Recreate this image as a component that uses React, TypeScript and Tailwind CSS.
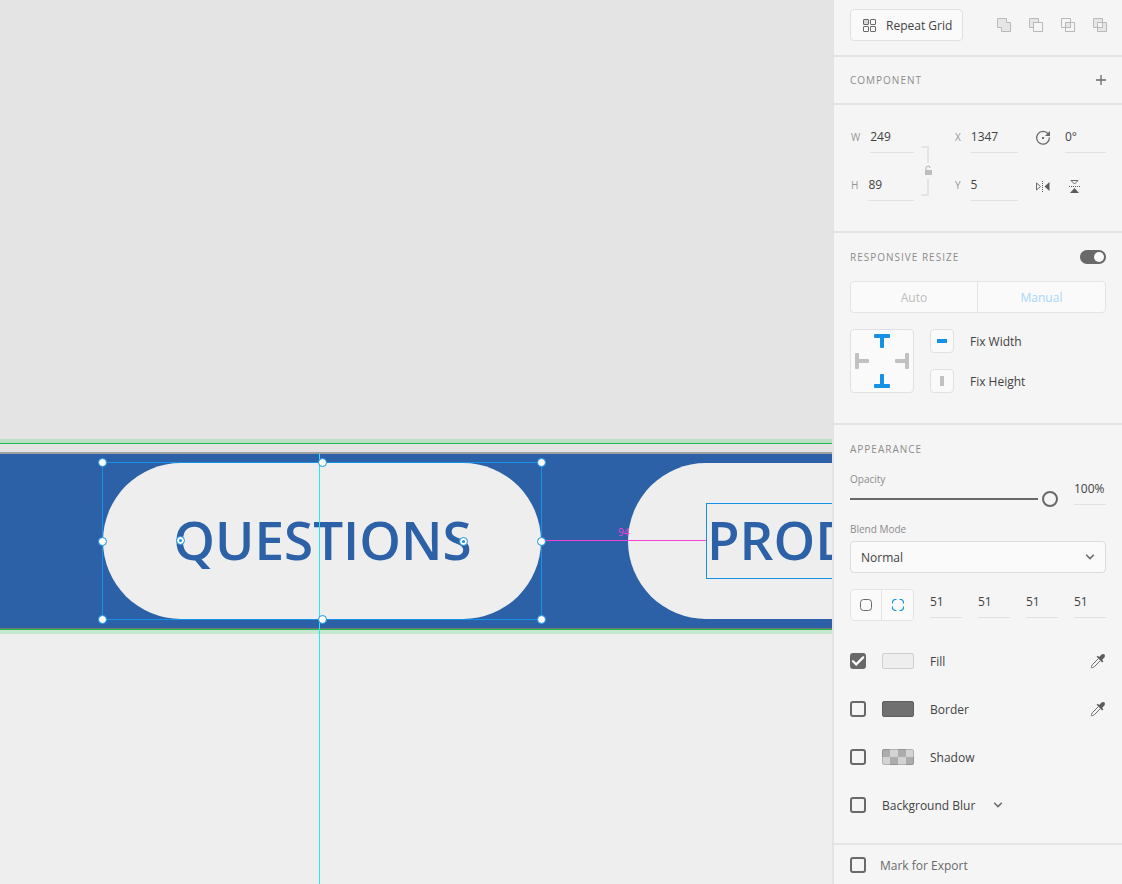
import { useState } from "react";
import type { ReactNode } from "react";

const handles = [
  "left-[98px] top-[458px]",
  "left-[318px] top-[458px]",
  "left-[537px] top-[458px]",
  "left-[98px] top-[537px]",
  "left-[537px] top-[537px]",
  "left-[98px] top-[615px]",
  "left-[318px] top-[615px]",
  "left-[537px] top-[615px]",
];

function Canvas() {
  return (
    <main className="relative min-w-0 flex-1 overflow-hidden bg-[#e4e4e4]">
      <div className="absolute inset-x-0 top-[439px] h-1 bg-[#bce0c5]" />
      <div className="absolute inset-x-0 top-[443px] h-px bg-[#24b950]" />
      <div className="absolute inset-x-0 top-[452px] bottom-0 border-t-2 border-[#a0a0a0] bg-[#eeeeee]" />
      <div className="absolute inset-x-0 top-[454px] h-[174px] bg-[#2c61a7]" />
      <div className="absolute inset-x-0 top-[628px] h-px bg-[#77776f]" />
      <div className="absolute inset-x-0 top-[629px] h-px bg-[#24b950]" />
      <div className="absolute inset-x-0 top-[630px] h-1 bg-[#c6e8cf]" />

      <div className="absolute left-[103px] top-[463px] flex h-[156px] w-[438px] items-center justify-center rounded-full bg-[#eeeeee] pb-[3px] pl-px font-['Open_Sans','Noto_Sans',sans-serif] text-[53px] font-semibold text-[#2c61a7]">
        QUESTIONS
      </div>
      <div className="absolute left-[628px] top-[463px] flex h-[156px] w-[438px] items-center rounded-full bg-[#eeeeee] pl-[78px]">
        <div className="flex h-[76px] w-[282px] items-center border border-[#1592e6] pb-[3px] font-['Open_Sans','Noto_Sans',sans-serif] text-[53px] font-semibold text-[#2c61a7]">
          PROD
        </div>
      </div>

      <div className="absolute left-[319px] top-[454px] bottom-0 w-px bg-[#22eef0]" />
      <div className="absolute left-[102px] top-[462px] h-[158px] w-[440px] border border-[#1592e6]" />
      <div className="absolute left-[546px] top-[540px] h-px w-[160px] bg-[#f53fd6]" />
      <span className="absolute left-[618px] top-[526px] text-[10px] leading-3 text-[#f53fd6]">94</span>
      {handles.map((place) => (
        <span key={place} className={`absolute size-[9px] rounded-full border border-[#1592e6] bg-white ${place}`} />
      ))}
      <span className="absolute left-[176px] top-[536px] flex size-[9px] items-center justify-center rounded-full border border-[#1592e6] bg-white">
        <span className="size-[3px] rounded-full bg-[#1592e6]" />
      </span>
      <span className="absolute left-[459px] top-[537px] flex size-[9px] items-center justify-center rounded-full border border-[#1592e6] bg-white">
        <span className="size-[3px] rounded-full bg-[#1592e6]" />
      </span>
    </main>
  );
}

function Heading({ children }: { children: ReactNode }) {
  return <h2 className="text-[10px] leading-4 tracking-widest text-[#8c8c8c]">{children}</h2>;
}

function NumberField({ label, value, showLabel = true }: { label: string; value: string; showLabel?: boolean }) {
  return (
    <label className="flex min-w-0 flex-1 items-center gap-2.5">
      {showLabel && <span className="pl-px text-[10px] text-[#959595]">{label}</span>}
      <input
        aria-label={label}
        defaultValue={value}
        className="h-8 w-0 min-w-0 flex-1 border-b border-[#e1e1e1] bg-transparent text-xs text-[#424242] outline-none"
      />
    </label>
  );
}

function Check({ id, checked = false }: { id: string; checked?: boolean }) {
  const [on, setOn] = useState(checked);
  return (
    <span className="relative size-4 shrink-0">
      <input
        id={id}
        type="checkbox"
        checked={on}
        onChange={() => setOn(!on)}
        className="block size-4 appearance-none rounded-[3px] border-2 border-[#696969] checked:bg-[#696969]"
      />
      {on && (
        <svg viewBox="0 0 16 16" className="pointer-events-none absolute inset-0 size-4" fill="none" stroke="#fff" strokeWidth="2.2">
          <path d="M3 8.2 6.2 11.4 13.2 4.4" strokeLinecap="round" />
        </svg>
      )}
    </span>
  );
}

function Chevron() {
  return (
    <svg viewBox="0 0 10 6" className="h-1.5 w-2.5" fill="none" stroke="#696969" strokeWidth="1.5">
      <path d="M1.2 0.8 5 4.6 8.8 0.8" />
    </svg>
  );
}

function Eyedropper() {
  return (
    <svg viewBox="0 0 16 16" className="size-4" fill="none">
      <path d="M8.2 5.8 2.6 11.4C1.6 12.4 1.9 13 1.3 13.9 1 14.5 1.6 15 2.2 14.7 3 14.2 3.7 14.4 4.6 13.4L10.2 7.8" stroke="#696969" />
      <path d="M6.6 3.8 7.8 2.7 9.2 3.9 11.3 1.8C12.3.8 13.7.8 14.5 1.6 15.2 2.4 15.2 3.7 14.2 4.7L12.2 6.8 13.3 8.2 12.2 9.4Z" fill="#5c5c5c" />
    </svg>
  );
}

const booleanIcons = [
  {
    name: "Add",
    art: <path d="M1.5 1.5h9v4h4v9h-9v-4h-4z" fill="#e6e6e6" />,
  },
  {
    name: "Subtract",
    art: (
      <>
        <path d="M1.5 1.5h9v4h-5v5h-4z" fill="#e6e6e6" />
        <path d="M5.5 5.5h9v9h-9z" />
      </>
    ),
  },
  {
    name: "Intersect",
    art: (
      <>
        <path d="M5.5 5.5h5v5h-5z" fill="#e6e6e6" />
        <path d="M1.5 1.5h9v9h-9zM5.5 5.5h9v9h-9z" />
      </>
    ),
  },
  {
    name: "Exclude overlap",
    art: (
      <>
        <path d="M1.5 1.5h9v9h-9zM5.5 5.5h9v9h-9z" fill="#e6e6e6" />
        <path d="M5.5 5.5h5v5h-5z" fill="#f5f5f5" />
      </>
    ),
  },
];

function ArrangeBar() {
  return (
    <section className="flex items-center justify-between border-b-2 border-[#e4e4e4] pt-[9px] pr-3.5 pb-3.5 pl-4">
      <button className="flex h-8 items-center gap-2.5 rounded border border-[#e1e1e1] bg-[#fafafa] pr-2.5 pl-3 text-xs text-[#424242]">
        <svg viewBox="0 0 13 13" className="size-[13px]" fill="none" stroke="#696969">
          <rect x=".5" y=".5" width="5" height="5" rx=".5" fill="#d8d8d8" />
          <rect x="7.5" y=".5" width="5" height="5" rx=".5" />
          <rect x=".5" y="7.5" width="5" height="5" rx=".5" />
          <rect x="7.5" y="7.5" width="5" height="5" rx=".5" />
        </svg>
        <span className="pt-0.5">Repeat Grid</span>
      </button>
      <div className="flex gap-4">
        {booleanIcons.map(({ name, art }) => (
          <button key={name} aria-label={name}>
            <svg viewBox="0 0 16 16" className="size-4" fill="none" stroke="#b9b9b9">
              {art}
            </svg>
          </button>
        ))}
      </div>
    </section>
  );
}

function TransformSection() {
  return (
    <section className="flex border-b-2 border-[#e4e4e4] px-4 pt-4 pb-[30px]">
      <div className="flex w-16 flex-col gap-4">
        <NumberField label="W" value="249" />
        <NumberField label="H" value="89" />
      </div>
      <button aria-label="Lock aspect ratio" className="ml-1.5">
        <svg viewBox="0 0 14 80" className="h-20 w-3.5" fill="none">
          <path d="M1.5 26H8v16M8 58v16H1.5" stroke="#e4e4e4" strokeWidth="2" />
          <rect x="5" y="49" width="7" height="5" rx=".5" fill="#bdbdbd" />
          <path d="M6 49.5v-2a2 2 0 0 1 4-.5" stroke="#bdbdbd" strokeWidth="1.2" />
        </svg>
      </button>
      <div className="ml-5 flex w-16 flex-col gap-4">
        <NumberField label="X" value="1347" />
        <NumberField label="Y" value="5" />
      </div>
      <div className="ml-4 flex flex-1 flex-col gap-4">
        <div className="flex items-center gap-[13px]">
          <svg viewBox="0 0 18 18" className="size-[18px]" fill="none">
            <path d="M14.2 6A6.4 6.4 0 1 0 15.4 9.4" stroke="#696969" strokeWidth="1.3" />
            <path d="M16 3v5h-5z" fill="#696969" />
            <rect x="8" y="9" width="2" height="2" fill="#696969" />
          </svg>
          <NumberField label="Rotation" value="0°" showLabel={false} />
        </div>
        <div className="flex h-8 items-center gap-3.5">
          <button aria-label="Flip horizontally">
            <svg viewBox="0 0 18 18" className="size-[18px]" fill="none">
              <path d="M2.5 7v7l4-3.5z" stroke="#696969" />
              <path d="M15.5 6v9l-5-4.5z" fill="#5c5c5c" />
              <path d="M8.5 5v11" stroke="#5c5c5c" strokeDasharray="1 1" />
            </svg>
          </button>
          <button aria-label="Flip vertically">
            <svg viewBox="0 0 18 18" className="size-[18px]" fill="none">
              <path d="M5 4.5h7l-3.5 3.5z" stroke="#696969" />
              <path d="M4 17h9l-4.5-5z" fill="#5c5c5c" />
              <path d="M3 10.5h11" stroke="#5c5c5c" strokeDasharray="1 1" />
            </svg>
          </button>
        </div>
      </div>
    </section>
  );
}

function ResizeSection() {
  const [responsive, setResponsive] = useState(true);
  return (
    <section className="border-b-2 border-[#e4e4e4] px-4 pt-4 pb-[30px]">
      <div className="flex items-center justify-between">
        <Heading>RESPONSIVE RESIZE</Heading>
        <button
          role="switch"
          aria-checked={responsive}
          aria-label="Responsive resize"
          onClick={() => setResponsive(!responsive)}
          className={`flex h-3.5 w-[26px] items-center rounded-full bg-[#696969] px-0.5 ${responsive ? "justify-end" : "justify-start"}`}
        >
          <span className="size-2.5 rounded-full bg-[#fafafa]" />
        </button>
      </div>
      <div className="mt-4 grid h-8 grid-cols-2 divide-x divide-[#e4e4e4] rounded border border-[#e4e4e4] bg-[#fafafa] text-xs">
        <button className="pt-0.5 text-[#bdbdbd]">Auto</button>
        <button className="pt-0.5 text-[#a8d7f7]">Manual</button>
      </div>
      <div className="mt-4 flex gap-4">
        <button aria-label="Constraints" className="size-16 rounded border border-[#e1e1e1] bg-[#fafafa]">
          <svg viewBox="0 0 62 62" className="size-[62px]">
            <g fill="#1592e6">
              <rect x="23" y="4" width="16" height="4" rx="1" />
              <rect x="29" y="4" width="4" height="14" rx="1" />
              <rect x="23" y="54" width="16" height="4" rx="1" />
              <rect x="29" y="44" width="4" height="14" rx="1" />
            </g>
            <g fill="#c1c1c1">
              <rect x="4" y="23" width="4" height="16" rx="1" />
              <rect x="4" y="29" width="14" height="4" rx="1" />
              <rect x="54" y="23" width="4" height="16" rx="1" />
              <rect x="44" y="29" width="14" height="4" rx="1" />
            </g>
          </svg>
        </button>
        <div className="flex flex-col gap-4 text-xs text-[#424242]">
          <div className="flex items-center gap-4">
            <button aria-labelledby="fix-width" className="flex size-6 items-center justify-center rounded border border-[#e1e1e1] bg-[#fafafa]">
              <span className="h-1 w-2.5 bg-[#1592e6]" />
            </button>
            <span id="fix-width" className="pt-0.5">Fix Width</span>
          </div>
          <div className="flex items-center gap-4">
            <button aria-labelledby="fix-height" className="flex size-6 items-center justify-center rounded border border-[#e1e1e1] bg-[#fafafa]">
              <span className="h-2.5 w-1 bg-[#c1c1c1]" />
            </button>
            <span id="fix-height" className="pt-0.5">Fix Height</span>
          </div>
        </div>
      </div>
    </section>
  );
}

function AppearanceSection() {
  return (
    <section className="border-b-2 border-[#e4e4e4] px-4 pt-4 pb-3.5 text-xs text-[#424242]">
      <Heading>APPEARANCE</Heading>
      <div className="mt-3.5 flex gap-4">
        <div className="flex flex-1 flex-col">
          <label htmlFor="opacity" className="text-[10px] leading-4 text-[#8c8c8c]">
            Opacity
          </label>
          <input
            id="opacity"
            type="range"
            defaultValue={100}
            className="h-6 w-full appearance-none overflow-hidden bg-transparent [&::-webkit-slider-runnable-track]:h-0.5 [&::-webkit-slider-runnable-track]:bg-[#696969] [&::-webkit-slider-thumb]:-mt-[7px] [&::-webkit-slider-thumb]:size-4 [&::-webkit-slider-thumb]:appearance-none [&::-webkit-slider-thumb]:rounded-full [&::-webkit-slider-thumb]:border-2 [&::-webkit-slider-thumb]:border-[#696969] [&::-webkit-slider-thumb]:bg-[#f5f5f5] [&::-webkit-slider-thumb]:shadow-[0_0_0_4px_#f5f5f5]"
          />
        </div>
        <input
          aria-label="Opacity value"
          defaultValue="100%"
          className="mt-0.5 h-8 w-8 border-b border-[#e1e1e1] bg-transparent outline-none"
        />
      </div>
      <label htmlFor="blend" className="mt-2.5 block text-[10px] leading-4 text-[#8c8c8c]">
        Blend Mode
      </label>
      <div className="relative mt-1">
        <select id="blend" className="h-8 w-full appearance-none rounded border border-[#dcdcdc] bg-[#fafafa] px-2.5 pt-0.5">
          <option>Normal</option>
          <option>Darken</option>
          <option>Multiply</option>
        </select>
        <span className="pointer-events-none absolute inset-y-0 right-[11px] flex items-center">
          <Chevron />
        </span>
      </div>
      <div className="mt-[13px] flex items-end gap-4">
        <div className="grid h-8 w-16 shrink-0 grid-cols-2 divide-x divide-[#e4e4e4] rounded border border-[#e4e4e4] bg-[#fafafa]">
          <button aria-label="Same radius for all corners" className="flex items-center justify-center">
            <svg viewBox="0 0 12 12" className="size-3" fill="none" stroke="#696969">
              <rect x=".5" y=".5" width="11" height="11" rx="3" />
            </svg>
          </button>
          <button aria-label="Different radius for each corner" className="flex items-center justify-center">
            <svg viewBox="0 0 12 12" className="size-3" fill="none" stroke="#1592e6" strokeWidth="1.2">
              <path d="M.5 4.5v-1a3 3 0 0 1 3-3h1M7.5.5h1a3 3 0 0 1 3 3v1M11.5 7.5v1a3 3 0 0 1-3 3h-1M4.5 11.5h-1a3 3 0 0 1-3-3v-1" />
            </svg>
          </button>
        </div>
        <div className="flex flex-1 gap-4 pb-[3px]">
          {["Top left", "Top right", "Bottom right", "Bottom left"].map((corner) => (
            <NumberField key={corner} label={`${corner} radius`} value="51" showLabel={false} />
          ))}
        </div>
      </div>
      <div className="mt-4">
        <div className="flex h-12 items-center gap-4">
          <Check id="fill" checked />
          <button aria-label="Fill colour" className="h-4 w-8 rounded-xs border border-[#cfcfcf] bg-[#eeeeee]" />
          <label htmlFor="fill" className="pt-0.5">Fill</label>
          <button aria-label="Pick fill colour" className="ml-auto">
            <Eyedropper />
          </button>
        </div>
        <div className="flex h-12 items-center gap-4">
          <Check id="border" />
          <button aria-label="Border colour" className="h-4 w-8 rounded-xs border border-[#5f5f5f] bg-[#707070]" />
          <label htmlFor="border" className="pt-0.5">Border</label>
          <button aria-label="Pick border colour" className="ml-auto">
            <Eyedropper />
          </button>
        </div>
        <div className="flex h-12 items-center gap-4">
          <Check id="shadow" />
          <button aria-label="Shadow colour" className="h-4 w-8 overflow-hidden rounded-xs">
            <svg viewBox="0 0 32 16" className="h-4 w-8">
              <rect width="32" height="16" fill="#d3d3d3" />
              <path d="M0 0h8v8H0zM16 0h8v8h-8zM8 8h8v8H8zM24 8h8v8h-8z" fill="#adadad" />
              <rect x=".5" y=".5" width="31" height="15" rx="1.5" fill="none" stroke="#000" strokeOpacity=".15" />
            </svg>
          </button>
          <label htmlFor="shadow" className="pt-0.5">Shadow</label>
        </div>
        <div className="flex h-12 items-center gap-4">
          <Check id="blur" />
          <label htmlFor="blur" className="pt-0.5">Background Blur</label>
          <button aria-label="Blur type" className="ml-0.5">
            <Chevron />
          </button>
        </div>
      </div>
    </section>
  );
}

export default function App() {
  return (
    <div className="flex min-h-screen font-['Open_Sans','Noto_Sans',sans-serif]">
      <Canvas />
      <aside className="w-[290px] shrink-0 border-l-2 border-[#e4e4e4] bg-[#f5f5f5]">
        <ArrangeBar />
        <section className="flex items-center justify-between border-b-2 border-[#e4e4e4] px-4 py-[15px]">
          <Heading>COMPONENT</Heading>
          <button aria-label="Add component">
            <svg viewBox="0 0 10 10" className="size-2.5" stroke="#696969" strokeWidth="1.3">
              <path d="M5 0v10M0 5h10" />
            </svg>
          </button>
        </section>
        <TransformSection />
        <ResizeSection />
        <AppearanceSection />
        <div className="flex h-[39px] items-center gap-3.5 px-4 text-xs text-[#696969]">
          <Check id="export" />
          <label htmlFor="export" className="pt-0.5">Mark for Export</label>
        </div>
      </aside>
    </div>
  );
}
